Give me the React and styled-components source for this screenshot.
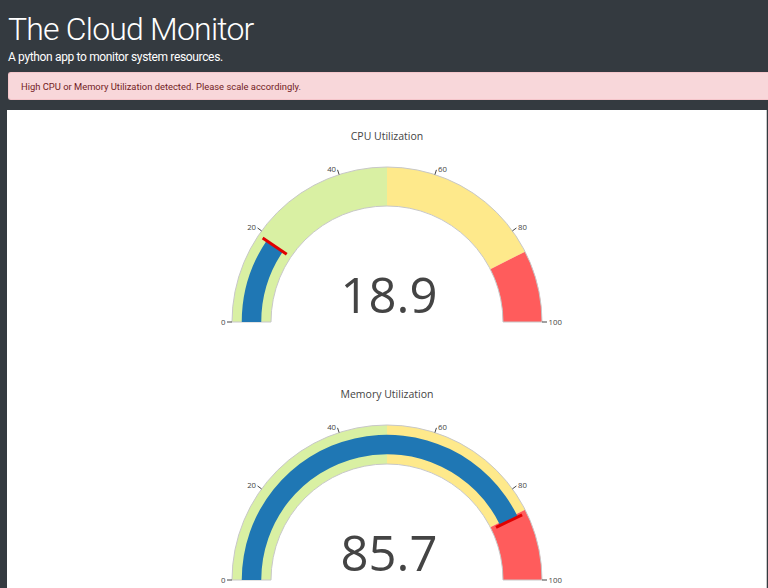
import styled, { createGlobalStyle } from 'styled-components';

const GlobalStyle = createGlobalStyle`
  html, body {
    margin: 0;
    padding: 0;
    overflow: hidden;
    background: #343a40;
  }
`;

const Page = styled.div`
  padding: 0 0 0 8px;
  font-family: Roboto, "Liberation Sans", sans-serif;
`;

const Title = styled.h1`
  margin: 0;
  padding-top: 10px;
  font-size: 32px;
  line-height: 38px;
  font-weight: 300;
  letter-spacing: -0.8px;
  color: #ffffff;
`;

const Subtitle = styled.p`
  margin: 0;
  font-size: 12px;
  line-height: 18px;
  font-weight: 400;
  letter-spacing: -0.35px;
  color: #ffffff;
`;

const Alert = styled.div`
  margin-top: 6px;
  height: 28px;
  box-sizing: border-box;
  padding: 0 12px;
  display: flex;
  align-items: center;
  background: #f8d7da;
  border: 1px solid #f5c6cb;
  border-right: none;
  border-radius: 3px 0 0 3px;
  color: #721c24;
  font-size: 9.4px;
`;

const Panel = styled.div`
  margin: 10px 0 0 -1px;
  width: 760px;
  box-sizing: border-box;
  background: #ffffff;
  border-right: 1px solid #c9c9c9;
  display: flex;
  flex-direction: column;
`;

const GaugeSvg = styled.svg`
  display: block;
  font-family: "Open Sans", verdana, arial, sans-serif;
`;

const CX = 380;
const CY = 212;
const R_OUT = 155;
const R_IN = 116;

const ang = (v) => Math.PI * (1 - v / 100);
const pt = (r, v) => [CX + r * Math.cos(ang(v)), CY - r * Math.sin(ang(v))];

function sector(v1, v2, r1, r2) {
  const [ax, ay] = pt(r2, v1);
  const [bx, by] = pt(r2, v2);
  const [cx, cy] = pt(r1, v2);
  const [dx, dy] = pt(r1, v1);
  return `M${ax},${ay} A${r2},${r2} 0 0 1 ${bx},${by} L${cx},${cy} A${r1},${r1} 0 0 0 ${dx},${dy} Z`;
}

const steps = [
  { from: 0, to: 50, color: '#d9f0a3' },
  { from: 50, to: 85, color: '#fee98b' },
  { from: 85, to: 100, color: '#ff5c5c' },
];

const ticks = [0, 20, 40, 60, 80, 100];

function Gauge({ title, value }) {
  const [t1x, t1y] = pt(121, value);
  const [t2x, t2y] = pt(150, value);
  return (
    <GaugeSvg width="759" height="258" viewBox="0 0 759 258">
      <text x={CX} y="29.5" textAnchor="middle" fontSize="10.5" fill="#444">
        {title}
      </text>
      {steps.map((s) => (
        <path key={s.from} d={sector(s.from, s.to, R_IN, R_OUT)} fill={s.color} />
      ))}
      <path d={sector(0, 100, R_IN, R_OUT)} fill="none" stroke="#c8c8c8" strokeWidth="1" />
      <path d={sector(0, value, 125.75, 145.25)} fill="#1f77b4" />
      <line x1={t1x} y1={t1y} x2={t2x} y2={t2y} stroke="#e00000" strokeWidth="3" />
      {ticks.map((t) => {
        const [ax, ay] = pt(R_OUT, t);
        const [bx, by] = pt(R_OUT + 5, t);
        const left = t < 50;
        return (
          <g key={t}>
            <line x1={ax} y1={ay} x2={bx} y2={by} stroke="#444" strokeWidth="1" />
            <text
              x={bx + (left ? -1.5 : 1.5)}
              y={by + (t === 0 || t === 100 ? 2.7 : 2)}
              textAnchor={left ? 'end' : 'start'}
              fontSize="7.8"
              fill="#444"
            >
              {t}
            </text>
          </g>
        );
      })}
      <text x={CX + 2} y="203" textAnchor="middle" fontSize="49" fill="#444">
        {value.toFixed(1)}
      </text>
    </GaugeSvg>
  );
}

export default function App() {
  return (
    <>
      <GlobalStyle />
      <Page>
        <Title>The Cloud Monitor</Title>
        <Subtitle>A python app to monitor system resources.</Subtitle>
        <Alert>High CPU or Memory Utilization detected. Please scale accordingly.</Alert>
        <Panel>
          <Gauge title="CPU Utilization" value={18.9} />
          <Gauge title="Memory Utilization" value={85.7} />
        </Panel>
      </Page>
    </>
  );
}
